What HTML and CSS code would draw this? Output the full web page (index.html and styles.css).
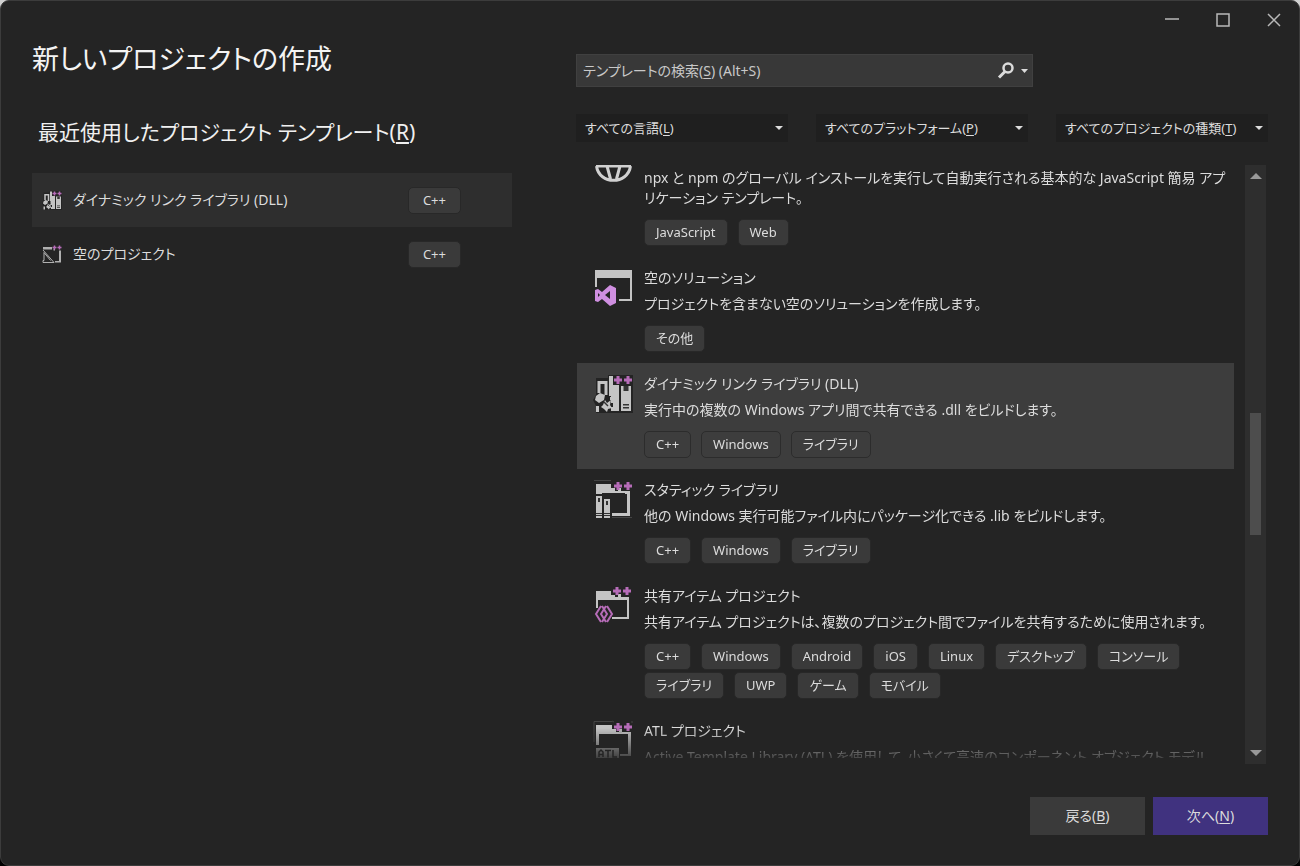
FILE: index.html
```html
<!DOCTYPE html>
<html lang="ja">
<head>
  <meta charset="UTF-8" />
  <title>新しいプロジェクトの作成</title>
  <link rel="stylesheet" href="styles.css">
</head>
<body>
  <svg class="sprite" aria-hidden="true">
    <symbol id="plusplus" viewBox="0 0 20 10">
      <path d="M1 5h8M5 1v8M11 5h8M15 1v8" stroke="#b66cb8" stroke-width="3" fill="none" />
    </symbol>
    <symbol id="icon-dll" viewBox="0 0 40 40">
      <path d="M3 5h12V2h25v38H3V33L0 27l3-5z" fill="#242424" />
      <path d="M6 20V9.500h7V22" stroke="#c4c4c4" stroke-width="3" fill="none" />
      <path d="M16 3h4v9h6v26h-8v-4h2v-4h-2v-7h-2z" fill="#c4c4c4" />
      <path d="M28 13h10v25H28z" fill="#c4c4c4" />
      <path d="M30.500 13h5v5h-5zM30 31h6v1.500h-6zM30 34h6v1.500h-6z" fill="#333" />
      <path d="M7 20l5 2-1 5-5 3-4-3 1-4zM12 27l2 3 4-3-1 5 2 3-4 1-1 3-3-3-3-2 2-2zM3 33h3v6H3zM17 24h3v3h-3z" fill="#c4c4c4" />
      <path d="M11 29l4 4" stroke="#333" stroke-width="1.500" />
      <use href="#plusplus" x="20" y="2" width="20" height="10" />
    </symbol>
    <symbol id="icon-static" viewBox="0 0 40 40">
      <path d="M3 5h15v4h4v3h15v25H19v-3h15V14H9v2H3z" fill="#c4c4c4" />
      <path d="M25 9h3v3h-3zM32 12h3v3h-3z" fill="#c4c4c4" />
      <path d="M1 15h9v3h8v22H1z" fill="#242424" />
      <path d="M3 17h6v22H3zM11 20h6v19h-6z" fill="#c4c4c4" />
      <path d="M5 19h2v4H5zM13 22h2v4h-2zM3 34h6v1H3zM3 36h6v1H3zM11 34h6v1h-6zM11 36h6v1h-6z" fill="#333" />
      <path d="M1 1.500h17M19 38.500h20" stroke="#444" />
      <use href="#plusplus" x="20" y="2" width="20" height="10" />
    </symbol>
    <symbol id="icon-shared" viewBox="0 0 40 40">
      <path d="M3 6h15v4h4v2h14v22H19v-2h15V15H5v8H3z" fill="#c4c4c4" />
      <path d="M25 9h3v4h-3z" fill="#c4c4c4" />
      <path d="M8 21l-5 8 5 8M14 21l5 8-5 8M9 21l5 8-5 8M13 21l-5 8 5 8" stroke="#b66cb8" stroke-width="2" fill="none" />
      <use href="#plusplus" x="19" y="1" width="20" height="10" />
    </symbol>
    <symbol id="icon-atl" viewBox="0 0 40 40">
      <path d="M3 5h16v4h4v3h15v24H27v-2h8V14H6v11H3z" fill="#c4c4c4" />
      <path d="M26 9h3v4h-3zM3 28h23v11H3z" fill="#b4b4b4" />
      <path d="M6 37v-5l2-2 2 2v5M6 34.500h4M12 30.500h6M15 30.500v7M20 30v7h4" stroke="#242424" stroke-width="1.500" fill="none" />
      <path d="M1 22V1.500h18M19 1l2 1M38 2h2" stroke="#444" fill="none" />
      <use href="#plusplus" x="20" y="2" width="20" height="10" />
    </symbol>
    <symbol id="icon-solution" viewBox="0 0 40 40">
      <path d="M2 3h37v31H26v-2h11V11H4v9H2z" fill="#c4c4c4" />
      <path fill-rule="evenodd" d="M17 18l6 3v15l-6 3-8-7-4 3-3-1V23l3-1 4 3zM17 24l-5 4 5 4zM5 26v4l2-2z" fill="#cf8fe0" />
    </symbol>
    <symbol id="icon-empty" viewBox="0 0 40 40">
      <path d="M2 6h18v5H2zM23 9h3v4h-3zM34 13h4v24H26v-3h8z" fill="#b0b0b0" />
      <path d="M2 12l22 25H2v-4h2V17l13 16" stroke="#b0b0b0" stroke-width="2" fill="none" />
      <use href="#plusplus" x="20" y="2" width="20" height="10" />
    </symbol>
    <symbol id="icon-globe" viewBox="0 0 40 17">
      <path d="M3 1h35M3.500 1C6 20 35 20 37.500 1M14 1l3.500 13M27 1l-3.500 13" stroke="#d0d0d0" stroke-width="3" fill="none" />
    </symbol>
  </svg>

  <div class="window">
    <header class="titlebar">
      <button type="button" aria-label="最小化"><svg width="14" height="14"><path d="M0 6h14" /></svg></button>
      <button type="button" aria-label="最大化"><svg width="14" height="14"><path d="M1 1h12v12H1z" /></svg></button>
      <button type="button" aria-label="閉じる"><svg width="14" height="14"><path d="M1 1l12 12M13 1L1 13" /></svg></button>
    </header>

    <main class="columns">
      <section class="recent">
        <h1>新しいプロジェクトの作成</h1>
        <h2>最近使用したプロジェクト テンプレート(<u>R</u>)</h2>
        <ul class="recent-list">
          <li class="recent-item active">
            <svg class="small-icon"><use href="#icon-dll" /></svg>
            <span class="recent-name">ダイナミック リンク ライブラリ (DLL)</span>
            <span class="tag">C++</span>
          </li>
          <li class="recent-item">
            <svg class="small-icon"><use href="#icon-empty" /></svg>
            <span class="recent-name">空のプロジェクト</span>
            <span class="tag">C++</span>
          </li>
        </ul>
      </section>

      <section class="templates">
        <div class="search">
          <label for="search">テンプレートの検索(<u>S</u>) (Alt+S)</label>
          <input type="text" id="search" />
          <button type="button" aria-label="検索">
            <svg width="32" height="18">
              <circle cx="11" cy="6" r="4.500" />
              <path class="handle" d="M8 9.500L2 15.500" />
              <path class="arrow" d="M24 7h7l-3.500 4z" />
            </svg>
          </button>
        </div>

        <div class="filters">
          <div class="filter">
            <label for="language">すべての言語(<u>L</u>)</label>
            <select id="language"><option>すべての言語</option></select>
            <span class="caret"></span>
          </div>
          <div class="filter">
            <label for="platform">すべてのプラットフォーム(<u>P</u>)</label>
            <select id="platform"><option>すべてのプラットフォーム</option></select>
            <span class="caret"></span>
          </div>
          <div class="filter">
            <label for="type">すべてのプロジェクトの種類(<u>T</u>)</label>
            <select id="type"><option>すべてのプロジェクトの種類</option></select>
            <span class="caret"></span>
          </div>
        </div>

        <div class="results">
          <ul class="template-list">
            <li class="template partial">
              <svg class="icon globe"><use href="#icon-globe" /></svg>
              <div class="info">
                <p>npx と npm のグローバル インストールを実行して自動実行される基本的な JavaScript 簡易 アプリケーション テンプレート。</p>
                <div class="tags"><span class="tag">JavaScript</span><span class="tag">Web</span></div>
              </div>
            </li>
            <li class="template">
              <svg class="icon"><use href="#icon-solution" /></svg>
              <div class="info">
                <h3>空のソリューション</h3>
                <p>プロジェクトを含まない空のソリューションを作成します。</p>
                <div class="tags"><span class="tag">その他</span></div>
              </div>
            </li>
            <li class="template selected">
              <svg class="icon"><use href="#icon-dll" /></svg>
              <div class="info">
                <h3>ダイナミック リンク ライブラリ (DLL)</h3>
                <p>実行中の複数の Windows アプリ間で共有できる .dll をビルドします。</p>
                <div class="tags"><span class="tag">C++</span><span class="tag">Windows</span><span class="tag">ライブラリ</span></div>
              </div>
            </li>
            <li class="template">
              <svg class="icon"><use href="#icon-static" /></svg>
              <div class="info">
                <h3>スタティック ライブラリ</h3>
                <p>他の Windows 実行可能ファイル内にパッケージ化できる .lib をビルドします。</p>
                <div class="tags"><span class="tag">C++</span><span class="tag">Windows</span><span class="tag">ライブラリ</span></div>
              </div>
            </li>
            <li class="template">
              <svg class="icon"><use href="#icon-shared" /></svg>
              <div class="info">
                <h3>共有アイテム プロジェクト</h3>
                <p>共有アイテム プロジェクトは、複数のプロジェクト間でファイルを共有するために使用されます。</p>
                <div class="tags">
                  <span class="tag">C++</span><span class="tag">Windows</span><span class="tag">Android</span><span class="tag">iOS</span><span class="tag">Linux</span><span class="tag">デスクトップ</span><span class="tag">コンソール</span><span class="tag">ライブラリ</span><span class="tag">UWP</span><span class="tag">ゲーム</span><span class="tag">モバイル</span>
                </div>
              </div>
            </li>
            <li class="template">
              <svg class="icon"><use href="#icon-atl" /></svg>
              <div class="info">
                <h3>ATL プロジェクト</h3>
                <p>Active Template Library (ATL) を使用して、小さくて高速のコンポーネント オブジェクト モデル</p>
              </div>
            </li>
          </ul>
          <div class="scrollbar">
            <button type="button" class="up" aria-label="上へ"></button>
            <div class="track"><div class="thumb"></div></div>
            <button type="button" class="down" aria-label="下へ"></button>
          </div>
        </div>
      </section>
    </main>

    <footer class="actions">
      <button type="button">戻る(<u>B</u>)</button>
      <button type="button" class="primary">次へ(<u>N</u>)</button>
    </footer>
  </div>
</body>
</html>
```
FILE: styles.css
```css
* {
  box-sizing: border-box;
}
body {
  margin: 0;
  background: linear-gradient(#d0d0d0 50%, #000 50%);
  color: #dcdcdc;
  font-family: "Noto Sans", "Noto Sans CJK JP", sans-serif;
  font-feature-settings: "palt";
  font-size: 14px;
  line-height: 20px;
}
h1, h2, h3, p, ul {
  margin: 0;
  padding: 0;
  font-weight: normal;
}
ul {
  list-style: none;
}
button, input, select {
  border: none;
  border-radius: 0;
  color: inherit;
  font: inherit;
  font-feature-settings: inherit;
}
u {
  text-underline-offset: 2px;
}
.sprite {
  display: block;
  width: 0;
  height: 0;
}
.window {
  display: flex;
  flex-direction: column;
  height: 100vh;
  background: #242424;
  border: 1px solid #3c3c3c;
  border-radius: 9px;
}

/* window buttons */
.titlebar {
  display: flex;
  justify-content: flex-end;
  height: 38px;
}
.titlebar button {
  display: flex;
  align-items: center;
  justify-content: center;
  width: 51px;
  padding: 0;
  background: none;
}
.titlebar path {
  fill: none;
  stroke: #b8b8b8;
  stroke-width: 1.5;
}

.columns {
  flex: 1;
  min-height: 0;
  display: grid;
  grid-template-columns: 480fr 692fr;
  gap: 64px;
  padding: 0 31px;
}

/* recent templates */
h1 {
  color: #f4f4f4;
  font-size: 27px;
  line-height: 40px;
}
h2 {
  margin: 37px 0 25px 6px;
  color: #f0f0f0;
  font-size: 21px;
  line-height: 32px;
}
.recent-item {
  display: flex;
  align-items: center;
  height: 54px;
  padding: 0 51px 0 10px;
}
.recent-item.active {
  background: #2e2e2e;
}
.small-icon {
  width: 20px;
  height: 20px;
  margin-right: 11px;
}
.recent-name {
  flex: 1;
}
.recent-item .tag {
  padding: 0 14px;
}

/* search and filters */
.templates {
  display: flex;
  flex-direction: column;
  min-width: 0;
  min-height: 0;
}
.search {
  display: grid;
  grid-template-columns: 1fr auto;
  align-items: center;
  width: 66%;
  height: 33px;
  margin-top: 15px;
  background: #383838;
  border: 1px solid #404040;
}
.search label, .search input {
  grid-area: 1 / 1;
}
.search label, .filter label {
  z-index: 1;
  pointer-events: none;
}
.search label {
  padding-left: 6px;
  color: #c8c8c8;
}
.search input {
  width: 100%;
  height: 100%;
  padding: 0 6px;
  background: none;
}
.search button {
  display: flex;
  padding: 0 3px 0 0;
  background: none;
}
.search circle, .handle {
  fill: none;
  stroke: #dcdcdc;
  stroke-width: 2.5;
}
.handle {
  stroke-width: 3;
}
.arrow {
  fill: #dcdcdc;
}
.filters {
  display: grid;
  grid-template-columns: repeat(3, 1fr);
  gap: 28px;
  margin-top: 27px;
}
.filter {
  display: grid;
  align-items: center;
  height: 28px;
  background: #1f1f1f;
}
.filter label, .filter select, .caret {
  grid-area: 1 / 1;
}
.filter label {
  padding-left: 9px;
  font-size: 13px;
  white-space: nowrap;
}
.filter select {
  width: 100%;
  height: 100%;
  appearance: none;
  background: none;
  color: transparent;
}
.caret {
  justify-self: end;
  margin-right: 5px;
  border: 4px solid transparent;
  border-top-color: #dcdcdc;
  border-bottom: none;
  pointer-events: none;
}

/* template list */
.results {
  flex: 1;
  display: flex;
  gap: 11px;
  min-height: 0;
  margin-top: 23px;
  padding-right: 2px;
}
.template-list {
  flex: 1;
  min-width: 0;
  margin-bottom: 6px;
  padding-left: 1px;
  overflow: hidden;
  -webkit-mask-image: linear-gradient(to top, rgba(0,0,0,0.2), #000 30px);
  mask-image: linear-gradient(to top, rgba(0,0,0,0.2), #000 30px);
}
.template {
  display: flex;
  gap: 11px;
  padding: 11px 4px 11px 16px;
}
.template.partial {
  padding-top: 3px;
}
.template.selected {
  background: #3d3d3d;
}
.icon {
  flex: none;
  width: 40px;
  height: 40px;
  margin-top: -1px;
}
.icon.globe {
  height: 17px;
  margin-top: -3px;
}
.info {
  min-width: 0;
}
h3 {
  margin-bottom: 6px;
  font-size: 14px;
  line-height: 20px;
}
.tags {
  display: flex;
  flex-wrap: wrap;
  gap: 2px 10px;
  margin-top: 11px;
}
.tag {
  height: 27px;
  padding: 0 11px;
  background: #3a3a3a;
  border: 1px solid #282828;
  border-radius: 5px;
  font-size: 13px;
  line-height: 25px;
}
.selected .tag {
  background: #3d3d3d;
  border-color: #2c2c2c;
}
.scrollbar {
  display: flex;
  flex-direction: column;
  width: 21px;
  background: #2e2e2e;
}
.scrollbar button {
  display: flex;
  align-items: center;
  justify-content: center;
  height: 22px;
  padding: 0;
  background: none;
}
.up::before, .down::before {
  content: "";
  border: 6px solid transparent;
}
.up::before {
  border-bottom-color: #999;
  border-top: none;
}
.down::before {
  border-top-color: #999;
  border-bottom: none;
}
.track {
  flex: 1;
  display: flex;
  flex-direction: column;
  align-items: center;
}
.track::before {
  content: "";
  flex: 226;
}
.track::after {
  content: "";
  flex: 207;
}
.thumb {
  flex: 122;
  width: 11px;
  background: #4d4d4d;
}

/* bottom buttons */
.actions {
  display: flex;
  justify-content: flex-end;
  gap: 8px;
  padding: 33px 31px 30px;
}
.actions button {
  width: 115px;
  height: 38px;
  background: #3a3a3a;
}
.actions .primary {
  background: #40327f;
}
```
